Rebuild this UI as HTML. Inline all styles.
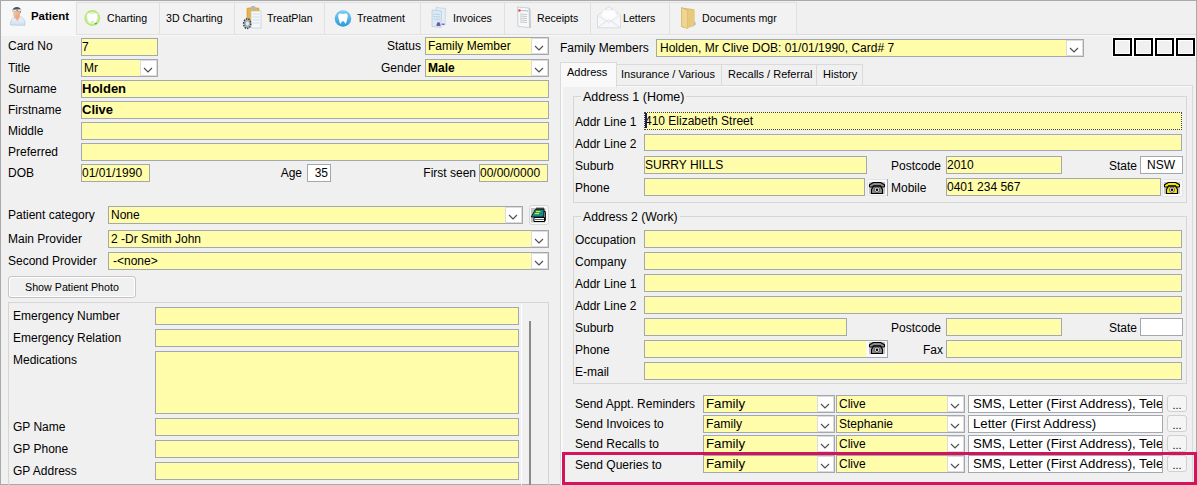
<!DOCTYPE html><html><head><meta charset='utf-8'><style>
html,body{margin:0;padding:0;}
body{width:1197px;height:485px;overflow:hidden;position:relative;background:#f0f0f0;font-family:"Liberation Sans",sans-serif;color:#000;}
.a{position:absolute;white-space:pre;}
</style></head><body>
<div class='a' style='left:1px;top:1px;width:75px;height:35px;background:#f7f7f7;'></div>
<div class='a' style='left:76px;top:34px;width:1120px;height:1px;background:#dcdcdc;'></div>
<div class='a' style='left:76px;top:35px;width:1120px;height:1px;background:#f8f8f8;'></div>
<div class='a' style='left:76px;top:2px;width:84px;height:33px;background:#f2f2f2;border:1px solid #e0e0e0;box-sizing:border-box;'></div>
<div class='a' style='left:107px;top:10px;height:16px;line-height:16px;font-size:10.6px;'>Charting</div>
<div class='a' style='left:159px;top:2px;width:76px;height:33px;background:#f2f2f2;border:1px solid #e0e0e0;box-sizing:border-box;'></div>
<div class='a' style='left:166px;top:10px;height:16px;line-height:16px;font-size:10.6px;'>3D Charting</div>
<div class='a' style='left:234px;top:2px;width:91px;height:33px;background:#f2f2f2;border:1px solid #e0e0e0;box-sizing:border-box;'></div>
<div class='a' style='left:267px;top:10px;height:16px;line-height:16px;font-size:10.6px;'>TreatPlan</div>
<div class='a' style='left:324px;top:2px;width:97px;height:33px;background:#f2f2f2;border:1px solid #e0e0e0;box-sizing:border-box;'></div>
<div class='a' style='left:357px;top:10px;height:16px;line-height:16px;font-size:10.6px;'>Treatment</div>
<div class='a' style='left:420px;top:2px;width:85px;height:33px;background:#f2f2f2;border:1px solid #e0e0e0;box-sizing:border-box;'></div>
<div class='a' style='left:453px;top:10px;height:16px;line-height:16px;font-size:10.6px;'>Invoices</div>
<div class='a' style='left:504px;top:2px;width:87px;height:33px;background:#f2f2f2;border:1px solid #e0e0e0;box-sizing:border-box;'></div>
<div class='a' style='left:537px;top:10px;height:16px;line-height:16px;font-size:10.6px;'>Receipts</div>
<div class='a' style='left:590px;top:2px;width:80px;height:33px;background:#f2f2f2;border:1px solid #e0e0e0;box-sizing:border-box;'></div>
<div class='a' style='left:623px;top:10px;height:16px;line-height:16px;font-size:10.6px;'>Letters</div>
<div class='a' style='left:669px;top:2px;width:128px;height:33px;background:#f2f2f2;border:1px solid #e0e0e0;box-sizing:border-box;'></div>
<div class='a' style='left:702px;top:10px;height:16px;line-height:16px;font-size:10.6px;'>Documents mgr</div>
<div class='a' style='left:31px;top:8px;height:16px;line-height:16px;font-size:11.4px;font-weight:bold;'>Patient</div>
<svg class='a' style='left:9px;top:5px' width='18' height='22' viewBox='0 0 18 22'>
<defs><linearGradient id='gb' x1='0' y1='0' x2='0' y2='1'><stop offset='0' stop-color='#eef5fc'/><stop offset='1' stop-color='#cfe0f0'/></linearGradient>
<linearGradient id='gf' x1='0' y1='0' x2='1' y2='1'><stop offset='0' stop-color='#fbd2b4'/><stop offset='1' stop-color='#e89a70'/></linearGradient></defs>
<path d='M1.5 20 C1.2 15.5 3.5 12.5 7 11.8 L10.5 11.5 C14 12.3 16.2 15 16 20.3 Z' fill='url(#gb)' stroke='#b0c4d8' stroke-width='0.7'/>
<path d='M5.5 12 L8.5 16.5 L11 12 Z' fill='#f0b592'/>
<ellipse cx='7.6' cy='8.6' rx='3.4' ry='5.3' fill='url(#gf)'/>
<path d='M3.6 5.5 C3.2 0.8 12.5 0.6 12 5.6 L11.6 8.5 L10.8 6.5 L4 6.5 Z' fill='#505050'/>
<path d='M3.6 4.8 L12.2 4.2 L12.2 6.2 L3.8 6.8 Z' fill='#e6e6e6' stroke='#c0c0c0' stroke-width='0.3'/>
<circle cx='8.2' cy='5.4' r='0.7' fill='#d04040'/>
</svg>
<svg class='a' style='left:83px;top:9px' width='18' height='18' viewBox='0 0 18 18'>
<circle cx='9.3' cy='9' r='7.9' fill='#b4ea6c'/>
<circle cx='9.3' cy='9' r='6.2' fill='#dcf5c0'/>
<path d='M4 5 C5.3 3.2 7.3 4.3 9.3 4.6 C11.3 4.3 13.3 3.2 14.6 5 C15.4 7.2 14 10 13.4 12.2 C12.8 14.8 11.9 15 11.3 13.3 C10.7 11.6 7.9 11.6 7.3 13.3 C6.7 15 5.8 14.8 5.2 12.2 C4.6 10 3.2 7.2 4 5 Z' fill='#ffffff' stroke='#c8dcc8' stroke-width='0.5'/>
<path d='M11.5 14.8 L14 13.6 L13.2 15.4 Z' fill='#2a8a2a'/>
</svg>
<svg class='a' style='left:242px;top:5px' width='21' height='25' viewBox='0 0 21 25'>
<rect x='5' y='3' width='12' height='17' rx='1' fill='#e6b445' stroke='#c4922a' stroke-width='0.6'/>
<path d='M8 3 L9.5 1 L12.5 1 L14 3 L13 4.5 L9 4.5 Z' fill='#b8b8b8'/>
<rect x='9' y='6' width='10' height='17' fill='#f4f7fb' stroke='#b8c4d0' stroke-width='0.6'/>
<g stroke='#c0c8d4' stroke-width='0.6'><line x1='10.5' y1='9' x2='17.5' y2='9'/><line x1='10.5' y1='12' x2='17.5' y2='12'/><line x1='10.5' y1='15' x2='17.5' y2='15'/><line x1='10.5' y1='18' x2='17.5' y2='18'/></g>
<ellipse cx='5.2' cy='18.6' rx='3.6' ry='4.9' fill='#a4b0b2' stroke='#2e3c48' stroke-width='1.4' stroke-dasharray='1.5 1.1'/>
<ellipse cx='5.4' cy='18.6' rx='1.6' ry='2.1' fill='#e6ecee'/>
</svg>
<svg class='a' style='left:334px;top:9px' width='18' height='19' viewBox='0 0 18 19'>
<defs><linearGradient id='gbl' x1='0' y1='0' x2='0' y2='1'><stop offset='0' stop-color='#7fd0f5'/><stop offset='1' stop-color='#2a9ad8'/></linearGradient></defs>
<circle cx='9' cy='9.5' r='8.3' fill='url(#gbl)'/>
<path d='M4.5 5.5 C5.8 3.6 7.4 4.7 9 5 C10.6 4.7 12.2 3.6 13.5 5.5 C14.3 7.5 13.1 10 12.6 12.2 C12.1 15 11.2 15.3 10.7 13.6 C10.2 11.8 7.8 11.8 7.3 13.6 C6.8 15.3 5.9 15 5.4 12.2 C4.9 10 3.7 7.5 4.5 5.5 Z' fill='#ffffff'/>
</svg>
<svg class='a' style='left:430px;top:5px' width='18' height='24' viewBox='0 0 18 24'>
<path d='M6 2.5 L15.5 3.5 L15 20 L6 19 Z' fill='#e4eef8' stroke='#b6c8da' stroke-width='0.6'/>
<path d='M2 5 L11.5 6 L11 22.5 L2 21.5 Z' fill='#dceaf6' stroke='#aac0d4' stroke-width='0.6'/>
<g stroke='#a9c6e2' stroke-width='0.7'><line x1='3.5' y1='9' x2='10' y2='9.5'/><line x1='3.5' y1='11.5' x2='10' y2='12'/><line x1='3.5' y1='14' x2='10' y2='14.5'/></g>
<path d='M6.5 21 C6.5 18 7.5 17 8.5 17 C9.5 17 10.5 18 10.5 21 Z' fill='#6a5aa8'/>
<circle cx='8.5' cy='16' r='1.2' fill='#e0e0f0'/>
<path d='M12 18.5 L14.5 18.5 L14.5 20 L12 20 Z' fill='#7a6ab8'/>
</svg>
<svg class='a' style='left:514px;top:5px' width='18' height='24' viewBox='0 0 18 24'>
<path d='M3.5 2 L15 3 L15.5 22.5 L4 21.5 Z' fill='#f6f8fa' stroke='#b8c0c8' stroke-width='0.7'/>
<path d='M15 3 L16.5 4 L17 23 L15.5 22.5 Z' fill='#c0c8d0'/>
<circle cx='5.5' cy='5.5' r='1.3' fill='#f04040'/>
<line x1='7.5' y1='5.5' x2='14' y2='6' stroke='#9aa6b4' stroke-width='0.8'/>
<g stroke='#a8a8a8' stroke-width='0.6'><line x1='6' y1='9' x2='13' y2='9.5'/><line x1='6' y1='11' x2='13' y2='11.5'/><line x1='6' y1='13' x2='13' y2='13.5'/><line x1='6' y1='15' x2='13' y2='15.5'/><line x1='6' y1='17' x2='13' y2='17.5'/></g>
</svg>
<svg class='a' style='left:596px;top:5px' width='26' height='25' viewBox='0 0 26 25'>
<path d='M1.5 10.5 L13 1.5 L24.5 10.5 L24.5 22.8 L1.5 22.8 Z' fill='#f7f8fa' stroke='#d2d6da' stroke-width='0.8'/>
<path d='M4.5 11 L7 5 L19 5 L21.5 11 L13 17 Z' fill='#fdfdfe' stroke='#e2e4e6' stroke-width='0.6'/>
<path d='M1.5 22.8 L13 14.5 L24.5 22.8' fill='none' stroke='#d6dadd' stroke-width='0.8'/>
<path d='M1.5 10.5 L13 18 L24.5 10.5' fill='none' stroke='#e0e3e6' stroke-width='0.7'/>
</svg>
<svg class='a' style='left:678px;top:5px' width='20' height='25' viewBox='0 0 20 25'>
<path d='M4 3 L16 4.5 L16 21 L4 22 Z' fill='#e6c678' stroke='#d0aa50' stroke-width='0.5'/>
<path d='M3.5 2.5 L9.5 5 L9.5 23.5 L3.5 21.5 Z' fill='#f0d590' stroke='#cfa850' stroke-width='0.6'/>
<path d='M9.5 5 L16.5 5.5 L16.5 20.5 L9.5 23.5 Z' fill='#e8c97c'/>
<rect x='16' y='17' width='1.5' height='3' fill='#a0b8d0'/>
</svg>
<div class='a' style='left:0px;top:0px;width:1197px;height:1px;background:#a9a9a9;'></div>
<div class='a' style='left:0px;top:0px;width:1px;height:485px;background:#a9a9a9;'></div>
<div class='a' style='left:1196px;top:0px;width:1px;height:485px;background:#a9a9a9;'></div>
<div class='a' style='left:0px;top:484px;width:1197px;height:1px;background:#a9a9a9;'></div>
<div class='a' style='left:8px;top:38px;height:16px;line-height:16px;font-size:12px;'>Card No</div>
<div class='a' style='left:81px;top:38px;width:77px;height:18px;background:#fffcaa;border:1px solid #a3a7ae;box-sizing:border-box;'><div class='a' style='left:0px;top:0px;height:16px;line-height:16px;font-size:12px;color:#000;'>7</div></div>
<div class='a' style='left:21px;width:400px;text-align:right;top:38px;height:16px;line-height:16px;font-size:12px;'>Status</div>
<div class='a' style='left:425px;top:37px;width:124px;height:18px;background:#fffcaa;border:1px solid #a3a7ae;box-sizing:border-box;'><div class='a' style='left:2px;top:0px;height:16px;line-height:16px;font-size:12px;color:#000;'>Family Member</div></div>
<div class='a' style='left:531px;top:38px;width:17px;height:16px;background:#ffffff;border:1px solid #dcdcdc;box-sizing:border-box;'><svg width='10' height='6' viewBox='0 0 10 6' style='position:absolute;left:2px;top:6px'><path d='M1 1 L5 5 L9 1' fill='none' stroke='#505050' stroke-width='1.15'/></svg></div>
<div class='a' style='left:8px;top:60px;height:16px;line-height:16px;font-size:12px;'>Title</div>
<div class='a' style='left:81px;top:59px;width:77px;height:18px;background:#fffcaa;border:1px solid #a3a7ae;box-sizing:border-box;'><div class='a' style='left:2px;top:0px;height:16px;line-height:16px;font-size:12px;color:#000;'>Mr</div></div>
<div class='a' style='left:140px;top:60px;width:17px;height:16px;background:#ffffff;border:1px solid #dcdcdc;box-sizing:border-box;'><svg width='10' height='6' viewBox='0 0 10 6' style='position:absolute;left:2px;top:6px'><path d='M1 1 L5 5 L9 1' fill='none' stroke='#505050' stroke-width='1.15'/></svg></div>
<div class='a' style='left:21px;width:400px;text-align:right;top:60px;height:16px;line-height:16px;font-size:12px;'>Gender</div>
<div class='a' style='left:425px;top:59px;width:124px;height:18px;background:#fffcaa;border:1px solid #a3a7ae;box-sizing:border-box;'><div class='a' style='left:2px;top:0px;height:16px;line-height:16px;font-size:12px;color:#000;font-weight:bold;'>Male</div></div>
<div class='a' style='left:531px;top:60px;width:17px;height:16px;background:#ffffff;border:1px solid #dcdcdc;box-sizing:border-box;'><svg width='10' height='6' viewBox='0 0 10 6' style='position:absolute;left:2px;top:6px'><path d='M1 1 L5 5 L9 1' fill='none' stroke='#505050' stroke-width='1.15'/></svg></div>
<div class='a' style='left:8px;top:81px;height:16px;line-height:16px;font-size:12px;'>Surname</div>
<div class='a' style='left:81px;top:80px;width:468px;height:18px;background:#fffcaa;border:1px solid #a3a7ae;box-sizing:border-box;'><div class='a' style='left:0px;top:0px;height:16px;line-height:16px;font-size:13px;color:#000;font-weight:bold;'>Holden</div></div>
<div class='a' style='left:8px;top:102px;height:16px;line-height:16px;font-size:12px;'>Firstname</div>
<div class='a' style='left:81px;top:101px;width:468px;height:18px;background:#fffcaa;border:1px solid #a3a7ae;box-sizing:border-box;'><div class='a' style='left:0px;top:0px;height:16px;line-height:16px;font-size:13px;color:#000;font-weight:bold;'>Clive</div></div>
<div class='a' style='left:8px;top:123px;height:16px;line-height:16px;font-size:12px;'>Middle</div>
<div class='a' style='left:81px;top:122px;width:468px;height:18px;background:#fffcaa;border:1px solid #a3a7ae;box-sizing:border-box;'></div>
<div class='a' style='left:8px;top:144px;height:16px;line-height:16px;font-size:12px;'>Preferred</div>
<div class='a' style='left:81px;top:143px;width:468px;height:18px;background:#fffcaa;border:1px solid #a3a7ae;box-sizing:border-box;'></div>
<div class='a' style='left:8px;top:165px;height:16px;line-height:16px;font-size:12px;'>DOB</div>
<div class='a' style='left:81px;top:164px;width:69px;height:18px;background:#fffcaa;border:1px solid #a3a7ae;box-sizing:border-box;'><div class='a' style='left:0px;top:0px;height:16px;line-height:16px;font-size:12px;color:#000;'>01/01/1990</div></div>
<div class='a' style='left:-98px;width:400px;text-align:right;top:165px;height:16px;line-height:16px;font-size:12px;'>Age</div>
<div class='a' style='left:307px;top:164px;width:24px;height:18px;background:#fff;border:1px solid #a3a7ae;box-sizing:border-box;'><div class='a' style='right:2px;top:0px;height:16px;line-height:16px;font-size:12px;color:#000;'>35</div></div>
<div class='a' style='left:76px;width:400px;text-align:right;top:165px;height:16px;line-height:16px;font-size:12px;'>First seen</div>
<div class='a' style='left:479px;top:164px;width:69px;height:18px;background:#fffcaa;border:1px solid #a3a7ae;box-sizing:border-box;'><div class='a' style='left:0px;top:0px;height:16px;line-height:16px;font-size:12px;color:#000;'>00/00/0000</div></div>
<div class='a' style='left:8px;top:207px;height:16px;line-height:16px;font-size:12px;'>Patient category</div>
<div class='a' style='left:108px;top:206px;width:415px;height:18px;background:#fffcaa;border:1px solid #a3a7ae;box-sizing:border-box;'><div class='a' style='left:2px;top:0px;height:16px;line-height:16px;font-size:12px;color:#000;'>None</div></div>
<div class='a' style='left:505px;top:207px;width:17px;height:16px;background:#ffffff;border:1px solid #dcdcdc;box-sizing:border-box;'><svg width='10' height='6' viewBox='0 0 10 6' style='position:absolute;left:2px;top:6px'><path d='M1 1 L5 5 L9 1' fill='none' stroke='#505050' stroke-width='1.15'/></svg></div>
<div class='a' style='left:8px;top:231px;height:16px;line-height:16px;font-size:12px;'>Main Provider</div>
<div class='a' style='left:108px;top:230px;width:441px;height:18px;background:#fffcaa;border:1px solid #a3a7ae;box-sizing:border-box;'><div class='a' style='left:2px;top:0px;height:16px;line-height:16px;font-size:12px;color:#000;'>2 -Dr Smith John</div></div>
<div class='a' style='left:531px;top:231px;width:17px;height:16px;background:#ffffff;border:1px solid #dcdcdc;box-sizing:border-box;'><svg width='10' height='6' viewBox='0 0 10 6' style='position:absolute;left:2px;top:6px'><path d='M1 1 L5 5 L9 1' fill='none' stroke='#505050' stroke-width='1.15'/></svg></div>
<div class='a' style='left:8px;top:253px;height:16px;line-height:16px;font-size:12px;'>Second Provider</div>
<div class='a' style='left:108px;top:252px;width:441px;height:18px;background:#fffcaa;border:1px solid #a3a7ae;box-sizing:border-box;'><div class='a' style='left:4px;top:0px;height:16px;line-height:16px;font-size:12px;color:#000;'>-&lt;none&gt;</div></div>
<div class='a' style='left:531px;top:253px;width:17px;height:16px;background:#ffffff;border:1px solid #dcdcdc;box-sizing:border-box;'><svg width='10' height='6' viewBox='0 0 10 6' style='position:absolute;left:2px;top:6px'><path d='M1 1 L5 5 L9 1' fill='none' stroke='#505050' stroke-width='1.15'/></svg></div>
<div class='a' style='left:529px;top:205px;width:20px;height:20px;background:#fafafa;border:1px solid #d6d6d6;border-radius:3px;box-sizing:border-box;'></div>
<svg class='a' style='left:529px;top:205px' width='20' height='20' viewBox='0 0 20 20'>
<rect x='2' y='3' width='14.5' height='14.5' fill='#c0c0c0'/>
<path d='M5 12.5 L15.5 12.5 L15.5 16.5 L5 16.5 Z' fill='#fff' stroke='#000' stroke-width='1'/>
<line x1='6' y1='14.5' x2='15' y2='14.5' stroke='#000' stroke-width='0.6'/>
<path d='M14.8 6 L16.3 7 L16.3 15 L15 16.5' fill='none' stroke='#000' stroke-width='1.1'/>
<path d='M2.2 12 L6.5 4.2 L15 4.2 L14.6 12 Z' fill='#128c8a' stroke='#000' stroke-width='0.8'/>
<path d='M8 4.5 L8 2.6 M10 4.5 L10 2.6 M12 4.5 L12 2.6 M14 4.5 L14 2.6' stroke='#000' stroke-width='1.1'/>
<line x1='7' y1='6.6' x2='11.3' y2='6.6' stroke='#f8f000' stroke-width='1.1'/>
<line x1='5.8' y1='8.6' x2='10' y2='8.6' stroke='#f8f000' stroke-width='1.1'/>
</svg>
<div class='a' style='left:8px;top:276px;width:128px;height:22px;background:#f0f0f0;border:1px solid #c4c4c4;border-radius:3px;box-sizing:border-box;box-shadow:inset 0 0 0 1px #fff;text-align:center;line-height:20px;font-size:10.7px;'>Show Patient Photo</div>
<div class='a' style='left:8px;top:302px;width:541px;height:1px;background:#d5d5d5;'></div>
<div class='a' style='left:8px;top:302px;width:1px;height:183px;background:#d5d5d5;'></div>
<div class='a' style='left:548px;top:302px;width:1px;height:183px;background:#d5d5d5;'></div>
<div class='a' style='left:521px;top:304px;width:1px;height:181px;background:#ffffff;'></div>
<div class='a' style='left:529px;top:321px;width:2px;height:164px;background:#8a8a8a;'></div>
<div class='a' style='left:13px;top:308px;height:16px;line-height:16px;font-size:12px;'>Emergency Number</div>
<div class='a' style='left:155px;top:307px;width:364px;height:18px;background:#fffcaa;border:1px solid #a3a7ae;box-sizing:border-box;'></div>
<div class='a' style='left:13px;top:330px;height:16px;line-height:16px;font-size:12px;'>Emergency Relation</div>
<div class='a' style='left:155px;top:329px;width:364px;height:18px;background:#fffcaa;border:1px solid #a3a7ae;box-sizing:border-box;'></div>
<div class='a' style='left:13px;top:352px;height:16px;line-height:16px;font-size:12px;'>Medications</div>
<div class='a' style='left:155px;top:351px;width:364px;height:63px;background:#fffcaa;border:1px solid #a3a7ae;box-sizing:border-box;'></div>
<div class='a' style='left:13px;top:419px;height:16px;line-height:16px;font-size:12px;'>GP Name</div>
<div class='a' style='left:155px;top:418px;width:364px;height:18px;background:#fffcaa;border:1px solid #a3a7ae;box-sizing:border-box;'></div>
<div class='a' style='left:13px;top:441px;height:16px;line-height:16px;font-size:12px;'>GP Phone</div>
<div class='a' style='left:155px;top:440px;width:364px;height:18px;background:#fffcaa;border:1px solid #a3a7ae;box-sizing:border-box;'></div>
<div class='a' style='left:13px;top:463px;height:16px;line-height:16px;font-size:12px;'>GP Address</div>
<div class='a' style='left:155px;top:462px;width:364px;height:18px;background:#fffcaa;border:1px solid #a3a7ae;box-sizing:border-box;'></div>
<div class='a' style='left:560px;top:40px;height:16px;line-height:16px;font-size:12px;'>Family Members</div>
<div class='a' style='left:656px;top:39px;width:428px;height:18px;background:#fffcaa;border:1px solid #a3a7ae;box-sizing:border-box;'><div class='a' style='left:3px;top:0px;height:16px;line-height:16px;font-size:12px;color:#000;'>Holden, Mr Clive DOB: 01/01/1990, Card# 7</div></div>
<div class='a' style='left:1066px;top:40px;width:17px;height:16px;background:#ffffff;border:1px solid #dcdcdc;box-sizing:border-box;'><svg width='10' height='6' viewBox='0 0 10 6' style='position:absolute;left:2px;top:6px'><path d='M1 1 L5 5 L9 1' fill='none' stroke='#505050' stroke-width='1.15'/></svg></div>
<div class='a' style='left:1113px;top:38px;width:19px;height:18px;border:2px solid #000;box-sizing:border-box;box-shadow:0 0 0 1px #fff, inset 0 0 0 1px #fff;'></div>
<div class='a' style='left:1134px;top:38px;width:19px;height:18px;border:2px solid #000;box-sizing:border-box;box-shadow:0 0 0 1px #fff, inset 0 0 0 1px #fff;'></div>
<div class='a' style='left:1155px;top:38px;width:19px;height:18px;border:2px solid #000;box-sizing:border-box;box-shadow:0 0 0 1px #fff, inset 0 0 0 1px #fff;'></div>
<div class='a' style='left:1176px;top:38px;width:19px;height:18px;border:2px solid #000;box-sizing:border-box;box-shadow:0 0 0 1px #fff, inset 0 0 0 1px #fff;'></div>
<div class='a' style='left:560px;top:85px;width:633px;height:400px;border:1px solid #dadada;border-bottom:none;box-sizing:border-box;background:#f0f0f0;'></div>
<div class='a' style='left:561px;top:86px;width:2px;height:399px;background:#fafafa;'></div>
<div class='a' style='left:561px;top:86px;width:631px;height:1px;background:#fafafa;'></div>
<div class='a' style='left:560px;top:62px;width:57px;height:25px;background:#f9f9f9;border:1px solid #dadada;border-bottom:none;box-sizing:border-box;'></div>
<div class='a' style='left:567px;top:64px;height:16px;line-height:16px;font-size:11px;'>Address</div>
<div class='a' style='left:616px;top:64px;width:106px;height:22px;background:#f0f0f0;border:1px solid #dadada;box-sizing:border-box;'></div>
<div class='a' style='left:621px;top:66px;height:16px;line-height:16px;font-size:11px;'>Insurance / Various</div>
<div class='a' style='left:721px;top:64px;width:96px;height:22px;background:#f0f0f0;border:1px solid #dadada;box-sizing:border-box;'></div>
<div class='a' style='left:728px;top:66px;height:16px;line-height:16px;font-size:11px;'>Recalls / Referral</div>
<div class='a' style='left:816px;top:64px;width:47px;height:22px;background:#f0f0f0;border:1px solid #dadada;box-sizing:border-box;'></div>
<div class='a' style='left:823px;top:66px;height:16px;line-height:16px;font-size:11px;'>History</div>
<div class='a' style='left:573px;top:96px;width:614px;height:107px;border:1px solid #d5d5d5;box-sizing:border-box;'></div>
<div class='a' style='left:581px;top:89px;height:16px;line-height:16px;font-size:12.5px;background:#f0f0f0;padding:0 2px;'>Address 1 (Home)</div>
<div class='a' style='left:575px;top:114px;height:16px;line-height:16px;font-size:12px;'>Addr Line 1</div>
<div class='a' style='left:644px;top:112px;width:538px;height:18px;background:#fffcaa;border:1px solid #a3a7ae;box-sizing:border-box;border:1px dotted #444;'><div class='a' style='left:0px;top:0px;height:16px;line-height:16px;font-size:12px;color:#000;'>410 Elizabeth Street</div></div>
<div class='a' style='left:645px;top:113px;width:2px;height:15px;background:#1a1a6a;'></div>
<div class='a' style='left:575px;top:136px;height:16px;line-height:16px;font-size:12px;'>Addr Line 2</div>
<div class='a' style='left:644px;top:134px;width:538px;height:17px;background:#fffcaa;border:1px solid #a3a7ae;box-sizing:border-box;'></div>
<div class='a' style='left:575px;top:158px;height:16px;line-height:16px;font-size:12px;'>Suburb</div>
<div class='a' style='left:644px;top:156px;width:223px;height:18px;background:#fffcaa;border:1px solid #a3a7ae;box-sizing:border-box;'><div class='a' style='left:0px;top:0px;height:16px;line-height:16px;font-size:12px;color:#000;'>SURRY HILLS</div></div>
<div class='a' style='left:891px;top:158px;height:16px;line-height:16px;font-size:12px;'>Postcode</div>
<div class='a' style='left:946px;top:156px;width:116px;height:18px;background:#fffcaa;border:1px solid #a3a7ae;box-sizing:border-box;'><div class='a' style='left:0px;top:0px;height:16px;line-height:16px;font-size:12px;color:#000;'>2010</div></div>
<div class='a' style='left:737px;width:400px;text-align:right;top:158px;height:16px;line-height:16px;font-size:12px;'>State</div>
<div class='a' style='left:1140px;top:156px;width:43px;height:18px;background:#fff;border:1px solid #a3a7ae;box-sizing:border-box;'><div class='a' style='left:6px;top:0px;height:16px;line-height:16px;font-size:12px;color:#000;'>NSW</div></div>
<div class='a' style='left:575px;top:180px;height:16px;line-height:16px;font-size:12px;'>Phone</div>
<div class='a' style='left:644px;top:178px;width:221px;height:18px;background:#fffcaa;border:1px solid #a3a7ae;box-sizing:border-box;'></div>
<div class='a' style='left:891px;top:180px;height:16px;line-height:16px;font-size:12px;'>Mobile</div>
<div class='a' style='left:946px;top:178px;width:215px;height:18px;background:#fffcaa;border:1px solid #a3a7ae;box-sizing:border-box;'><div class='a' style='left:0px;top:0px;height:16px;line-height:16px;font-size:12px;color:#000;'>0401 234 567</div></div>
<div class='a' style='left:573px;top:216px;width:614px;height:168px;border:1px solid #d5d5d5;box-sizing:border-box;'></div>
<div class='a' style='left:581px;top:209px;height:16px;line-height:16px;font-size:12.2px;background:#f0f0f0;padding:0 2px;'>Address 2 (Work)</div>
<div class='a' style='left:575px;top:232px;height:16px;line-height:16px;font-size:12px;'>Occupation</div>
<div class='a' style='left:644px;top:230px;width:538px;height:18px;background:#fffcaa;border:1px solid #a3a7ae;box-sizing:border-box;'></div>
<div class='a' style='left:575px;top:254px;height:16px;line-height:16px;font-size:12px;'>Company</div>
<div class='a' style='left:644px;top:252px;width:538px;height:18px;background:#fffcaa;border:1px solid #a3a7ae;box-sizing:border-box;'></div>
<div class='a' style='left:575px;top:276px;height:16px;line-height:16px;font-size:12px;'>Addr Line 1</div>
<div class='a' style='left:644px;top:274px;width:538px;height:18px;background:#fffcaa;border:1px solid #a3a7ae;box-sizing:border-box;'></div>
<div class='a' style='left:575px;top:298px;height:16px;line-height:16px;font-size:12px;'>Addr Line 2</div>
<div class='a' style='left:644px;top:296px;width:538px;height:18px;background:#fffcaa;border:1px solid #a3a7ae;box-sizing:border-box;'></div>
<div class='a' style='left:575px;top:320px;height:16px;line-height:16px;font-size:12px;'>Suburb</div>
<div class='a' style='left:644px;top:318px;width:203px;height:18px;background:#fffcaa;border:1px solid #a3a7ae;box-sizing:border-box;'></div>
<div class='a' style='left:891px;top:320px;height:16px;line-height:16px;font-size:12px;'>Postcode</div>
<div class='a' style='left:946px;top:318px;width:116px;height:18px;background:#fffcaa;border:1px solid #a3a7ae;box-sizing:border-box;'></div>
<div class='a' style='left:737px;width:400px;text-align:right;top:320px;height:16px;line-height:16px;font-size:12px;'>State</div>
<div class='a' style='left:1140px;top:318px;width:43px;height:18px;background:#fff;border:1px solid #a3a7ae;box-sizing:border-box;'></div>
<div class='a' style='left:575px;top:342px;height:16px;line-height:16px;font-size:12px;'>Phone</div>
<div class='a' style='left:644px;top:340px;width:244px;height:18px;background:#fffcaa;border:1px solid #a3a7ae;box-sizing:border-box;'></div>
<div class='a' style='left:543px;width:400px;text-align:right;top:342px;height:16px;line-height:16px;font-size:12px;'>Fax</div>
<div class='a' style='left:946px;top:340px;width:236px;height:18px;background:#fffcaa;border:1px solid #a3a7ae;box-sizing:border-box;'></div>
<div class='a' style='left:575px;top:364px;height:16px;line-height:16px;font-size:12px;'>E-mail</div>
<div class='a' style='left:644px;top:362px;width:538px;height:18px;background:#fffcaa;border:1px solid #a3a7ae;box-sizing:border-box;'></div>
<div class='a' style='left:867px;top:179px;width:21px;height:17px;background:#fafafa;border:1px solid #e4e4e4;border-radius:2px;box-sizing:border-box;'></div>
<svg class='a' style='left:868px;top:181px' width='18' height='14' viewBox='0 0 18 14'>
<rect x='1' y='1' width='16' height='12' fill='#c4c4c4'/>
<path d='M5.5 1.5 L12.5 1.5 L16.5 3.8 L16.5 5.8 L13.5 6.3 L12.5 4.8 L5.5 4.8 L4.5 6.3 L1.5 5.8 L1.5 3.8 Z' fill='#8a8a8a' stroke='#000' stroke-width='1.1' stroke-linejoin='round'/>
<path d='M5.5 5.2 L12.5 5.2 L14.5 8.5 L14.5 12.5 L3.5 12.5 L3.5 8.5 Z' fill='#8a8a8a' stroke='#000' stroke-width='1.1'/>
<circle cx='9' cy='8.7' r='2.6' fill='#fff' stroke='#000' stroke-width='0.6'/>
<circle cx='9' cy='8.7' r='1.3' fill='#000'/>
</svg>
<div class='a' style='left:1162px;top:179px;width:21px;height:18px;background:#fafafa;border:1px solid #e4e4e4;border-radius:2px;box-sizing:border-box;'></div>
<svg class='a' style='left:1163px;top:181px' width='18' height='14' viewBox='0 0 18 14'>
<rect x='1' y='1' width='16' height='12' fill='#c4c4c4'/>
<path d='M5.5 1.5 L12.5 1.5 L16.5 3.8 L16.5 5.8 L13.5 6.3 L12.5 4.8 L5.5 4.8 L4.5 6.3 L1.5 5.8 L1.5 3.8 Z' fill='#f4e800' stroke='#000' stroke-width='1.1' stroke-linejoin='round'/>
<path d='M5.5 5.2 L12.5 5.2 L14.5 8.5 L14.5 12.5 L3.5 12.5 L3.5 8.5 Z' fill='#f4e800' stroke='#000' stroke-width='1.1'/>
<circle cx='9' cy='8.7' r='2.6' fill='#fff' stroke='#000' stroke-width='0.6'/>
<circle cx='9' cy='8.7' r='1.3' fill='#000'/>
</svg>
<div class='a' style='left:866px;top:341px;width:21px;height:16px;background:#fafafa;'></div>
<svg class='a' style='left:868px;top:341px' width='18' height='14' viewBox='0 0 18 14'>
<rect x='1' y='1' width='16' height='12' fill='#c4c4c4'/>
<path d='M5.5 1.5 L12.5 1.5 L16.5 3.8 L16.5 5.8 L13.5 6.3 L12.5 4.8 L5.5 4.8 L4.5 6.3 L1.5 5.8 L1.5 3.8 Z' fill='#8a8a8a' stroke='#000' stroke-width='1.1' stroke-linejoin='round'/>
<path d='M5.5 5.2 L12.5 5.2 L14.5 8.5 L14.5 12.5 L3.5 12.5 L3.5 8.5 Z' fill='#8a8a8a' stroke='#000' stroke-width='1.1'/>
<circle cx='9' cy='8.7' r='2.6' fill='#fff' stroke='#000' stroke-width='0.6'/>
<circle cx='9' cy='8.7' r='1.3' fill='#000'/>
</svg>
<div class='a' style='left:887px;top:179px;width:1px;height:17px;background:#a0a4b0;'></div>
<div class='a' style='left:575px;top:396px;height:16px;line-height:16px;font-size:12px;'>Send Appt. Reminders</div>
<div class='a' style='left:703px;top:395px;width:132px;height:18px;background:#fffcaa;border:1px solid #a3a7ae;box-sizing:border-box;'><div class='a' style='left:2px;top:0px;height:16px;line-height:16px;font-size:13.3px;color:#000;'>Family</div></div>
<div class='a' style='left:817px;top:396px;width:17px;height:16px;background:#ffffff;border:1px solid #dcdcdc;box-sizing:border-box;'><svg width='10' height='6' viewBox='0 0 10 6' style='position:absolute;left:2px;top:6px'><path d='M1 1 L5 5 L9 1' fill='none' stroke='#505050' stroke-width='1.15'/></svg></div>
<div class='a' style='left:836px;top:395px;width:129px;height:18px;background:#fffcaa;border:1px solid #a3a7ae;box-sizing:border-box;'><div class='a' style='left:2px;top:0px;height:16px;line-height:16px;font-size:12px;color:#000;'>Clive</div></div>
<div class='a' style='left:947px;top:396px;width:17px;height:16px;background:#ffffff;border:1px solid #dcdcdc;box-sizing:border-box;'><svg width='10' height='6' viewBox='0 0 10 6' style='position:absolute;left:2px;top:6px'><path d='M1 1 L5 5 L9 1' fill='none' stroke='#505050' stroke-width='1.15'/></svg></div>
<div class='a' style='left:968px;top:395px;width:195px;height:18px;background:#fff;border:1px solid #a3a7ae;box-sizing:border-box;overflow:hidden;'><div class='a' style='left:4px;top:0px;height:16px;line-height:16px;font-size:13.2px;color:#000;'>SMS, Letter (First Address), Tele</div></div>
<div class='a' style='left:1167px;top:395px;width:20px;height:17px;background:#f5f5f5;border:1px solid #d0d0d0;border-radius:3px;box-sizing:border-box;text-align:center;font-size:11px;line-height:18px;'>...</div>
<div class='a' style='left:575px;top:416px;height:16px;line-height:16px;font-size:12px;'>Send Invoices to</div>
<div class='a' style='left:703px;top:415px;width:132px;height:18px;background:#fffcaa;border:1px solid #a3a7ae;box-sizing:border-box;'><div class='a' style='left:2px;top:0px;height:16px;line-height:16px;font-size:12.3px;color:#000;'>Family</div></div>
<div class='a' style='left:817px;top:416px;width:17px;height:16px;background:#ffffff;border:1px solid #dcdcdc;box-sizing:border-box;'><svg width='10' height='6' viewBox='0 0 10 6' style='position:absolute;left:2px;top:6px'><path d='M1 1 L5 5 L9 1' fill='none' stroke='#505050' stroke-width='1.15'/></svg></div>
<div class='a' style='left:836px;top:415px;width:129px;height:18px;background:#fffcaa;border:1px solid #a3a7ae;box-sizing:border-box;'><div class='a' style='left:2px;top:0px;height:16px;line-height:16px;font-size:12px;color:#000;'>Stephanie</div></div>
<div class='a' style='left:947px;top:416px;width:17px;height:16px;background:#ffffff;border:1px solid #dcdcdc;box-sizing:border-box;'><svg width='10' height='6' viewBox='0 0 10 6' style='position:absolute;left:2px;top:6px'><path d='M1 1 L5 5 L9 1' fill='none' stroke='#505050' stroke-width='1.15'/></svg></div>
<div class='a' style='left:968px;top:415px;width:195px;height:18px;background:#fff;border:1px solid #a3a7ae;box-sizing:border-box;overflow:hidden;'><div class='a' style='left:4px;top:0px;height:16px;line-height:16px;font-size:13.2px;color:#000;'>Letter (First Address)</div></div>
<div class='a' style='left:1167px;top:415px;width:20px;height:17px;background:#f5f5f5;border:1px solid #d0d0d0;border-radius:3px;box-sizing:border-box;text-align:center;font-size:11px;line-height:18px;'>...</div>
<div class='a' style='left:575px;top:436px;height:16px;line-height:16px;font-size:12px;'>Send Recalls to</div>
<div class='a' style='left:703px;top:435px;width:132px;height:18px;background:#fffcaa;border:1px solid #a3a7ae;box-sizing:border-box;'><div class='a' style='left:2px;top:0px;height:16px;line-height:16px;font-size:13.3px;color:#000;'>Family</div></div>
<div class='a' style='left:817px;top:436px;width:17px;height:16px;background:#ffffff;border:1px solid #dcdcdc;box-sizing:border-box;'><svg width='10' height='6' viewBox='0 0 10 6' style='position:absolute;left:2px;top:6px'><path d='M1 1 L5 5 L9 1' fill='none' stroke='#505050' stroke-width='1.15'/></svg></div>
<div class='a' style='left:836px;top:435px;width:129px;height:18px;background:#fffcaa;border:1px solid #a3a7ae;box-sizing:border-box;'><div class='a' style='left:2px;top:0px;height:16px;line-height:16px;font-size:12px;color:#000;'>Clive</div></div>
<div class='a' style='left:947px;top:436px;width:17px;height:16px;background:#ffffff;border:1px solid #dcdcdc;box-sizing:border-box;'><svg width='10' height='6' viewBox='0 0 10 6' style='position:absolute;left:2px;top:6px'><path d='M1 1 L5 5 L9 1' fill='none' stroke='#505050' stroke-width='1.15'/></svg></div>
<div class='a' style='left:968px;top:435px;width:195px;height:18px;background:#fff;border:1px solid #a3a7ae;box-sizing:border-box;overflow:hidden;'><div class='a' style='left:4px;top:0px;height:16px;line-height:16px;font-size:13.2px;color:#000;'>SMS, Letter (First Address), Tele</div></div>
<div class='a' style='left:1167px;top:435px;width:20px;height:17px;background:#f5f5f5;border:1px solid #d0d0d0;border-radius:3px;box-sizing:border-box;text-align:center;font-size:11px;line-height:18px;'>...</div>
<div class='a' style='left:575px;top:457px;height:16px;line-height:16px;font-size:12px;'>Send Queries to</div>
<div class='a' style='left:703px;top:455px;width:132px;height:18px;background:#fffcaa;border:1px solid #a3a7ae;box-sizing:border-box;'><div class='a' style='left:2px;top:0px;height:16px;line-height:16px;font-size:13.3px;color:#000;'>Family</div></div>
<div class='a' style='left:817px;top:456px;width:17px;height:16px;background:#ffffff;border:1px solid #dcdcdc;box-sizing:border-box;'><svg width='10' height='6' viewBox='0 0 10 6' style='position:absolute;left:2px;top:6px'><path d='M1 1 L5 5 L9 1' fill='none' stroke='#505050' stroke-width='1.15'/></svg></div>
<div class='a' style='left:836px;top:455px;width:129px;height:18px;background:#fffcaa;border:1px solid #a3a7ae;box-sizing:border-box;'><div class='a' style='left:2px;top:0px;height:16px;line-height:16px;font-size:12px;color:#000;'>Clive</div></div>
<div class='a' style='left:947px;top:456px;width:17px;height:16px;background:#ffffff;border:1px solid #dcdcdc;box-sizing:border-box;'><svg width='10' height='6' viewBox='0 0 10 6' style='position:absolute;left:2px;top:6px'><path d='M1 1 L5 5 L9 1' fill='none' stroke='#505050' stroke-width='1.15'/></svg></div>
<div class='a' style='left:968px;top:455px;width:195px;height:18px;background:#fff;border:1px solid #a3a7ae;box-sizing:border-box;overflow:hidden;'><div class='a' style='left:4px;top:0px;height:16px;line-height:16px;font-size:13.2px;color:#000;'>SMS, Letter (First Address), Tele</div></div>
<div class='a' style='left:1167px;top:455px;width:20px;height:17px;background:#f5f5f5;border:1px solid #d0d0d0;border-radius:3px;box-sizing:border-box;text-align:center;font-size:11px;line-height:18px;'>...</div>
<div class='a' style='left:562px;top:452px;width:635px;height:33px;border:3px solid #d4145a;box-sizing:border-box;'></div>
</body></html>
